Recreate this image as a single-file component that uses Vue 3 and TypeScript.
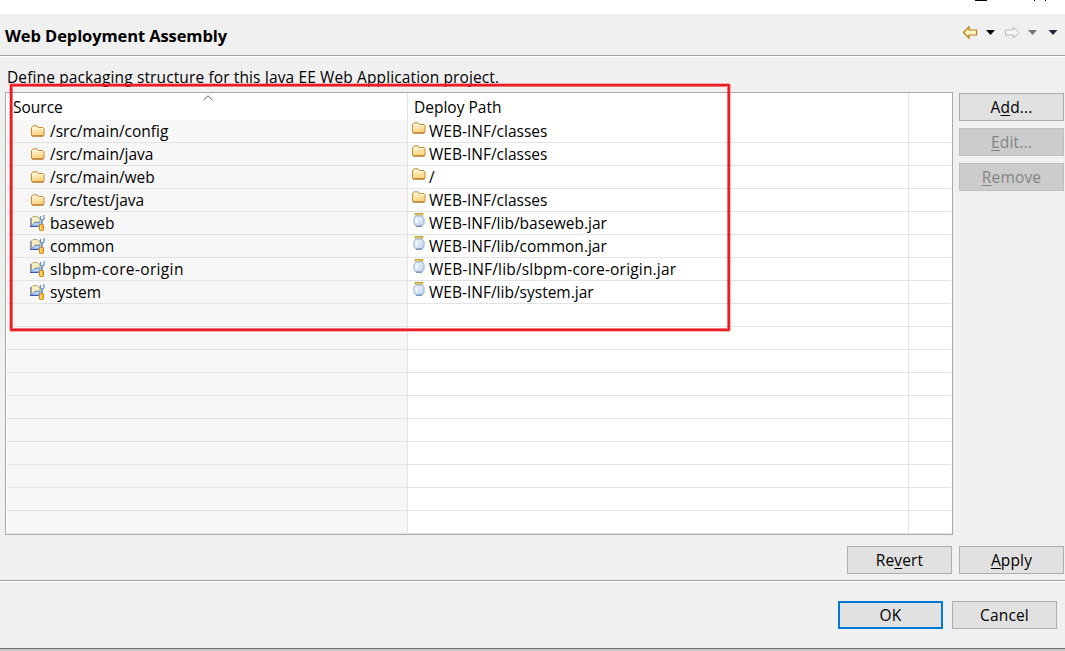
<script setup lang="ts">
interface Entry {
  source: string
  path: string
  kind: 'folder' | 'project'
}

const entries: Entry[] = [
  { source: '/src/main/config', path: 'WEB-INF/classes', kind: 'folder' },
  { source: '/src/main/java', path: 'WEB-INF/classes', kind: 'folder' },
  { source: '/src/main/web', path: '/', kind: 'folder' },
  { source: '/src/test/java', path: 'WEB-INF/classes', kind: 'folder' },
  { source: 'baseweb', path: 'WEB-INF/lib/baseweb.jar', kind: 'project' },
  { source: 'common', path: 'WEB-INF/lib/common.jar', kind: 'project' },
  { source: 'slbpm-core-origin', path: 'WEB-INF/lib/slbpm-core-origin.jar', kind: 'project' },
  { source: 'system', path: 'WEB-INF/lib/system.jar', kind: 'project' },
]
const emptyRows = 10
</script>

<template>
  <div class="dialog">
    <svg width="0" height="0" class="defs">
      <defs>
        <linearGradient id="gold" x1="0" y1="0" x2="0.3" y2="1">
          <stop offset="0" stop-color="#fffbe0" />
          <stop offset="1" stop-color="#fcd27c" />
        </linearGradient>
        <linearGradient id="glass" x1="0" y1="0" x2="1" y2="1">
          <stop offset="0" stop-color="#f4f9ff" />
          <stop offset="1" stop-color="#bcd3f0" />
        </linearGradient>
        <symbol id="folder" viewBox="0 0 14 12">
          <path d="M.5 10V2.500L2 .8h4l1.200 1.700H12l1 1V10l-.8 1H1.300z" fill="url(#gold)" stroke="#c88a35" />
          <path d="M1.500 3.500H12" stroke="#fff5cf" />
          <path d="M1 11h11.500" stroke="#ad6d20" />
        </symbol>
        <symbol id="project" viewBox="0 0 16 16">
          <path d="M1.500 11V3L3 1.500h4L8.500 3H10v4H5l-3.500 4z" fill="#f9edc4" stroke="#b8a575" />
          <path d="M.5 11.500V3" stroke="#7793c4" />
          <path d="M1 11L5 7.500h5.500L8.500 11z" fill="#b7d5f5" stroke="#6e9bd8" />
          <path d="M0 11.500H8.500" stroke="#3458ad" />
          <path d="M10.500 1v3l1.500 1.500L14 4V0" fill="none" stroke="#5f8fc0" stroke-width="1.200" />
          <path d="M12 5.500v4" stroke="#6286ae" stroke-width="1.500" />
          <rect x="9.500" y="9.500" width="4" height="6" rx=".8" fill="#f6b52b" stroke="#d18115" />
          <path d="M11 10v5" stroke="#ffe79a" />
        </symbol>
        <symbol id="jar" viewBox="0 0 12 16">
          <path d="M2 1.500h8v1.500H2z" fill="#fff1a6" stroke="#c5a12b" />
          <path d="M3 4L1 6.500v5L3 14h6l2-2.500v-5L9 4z" fill="url(#glass)" stroke="#94a9c6" />
          <path d="M3 14.200h6" stroke="#6282ad" />
          <path d="M3.300 7v4" stroke="#fff" />
        </symbol>
      </defs>
    </svg>

    <div class="caption"><i class="dash"></i><i class="dot"></i><i class="dot last"></i></div>
    <header>
      <h1>Web Deployment Assembly</h1>
      <nav>
        <svg width="100" height="18" viewBox="0 0 100 18">
          <path d="M1.400 8.500L7 3v3h7.500v5H7v3z" fill="#fff4c4" stroke="#bb7c16" stroke-width="1.200" />
          <path d="M24 6h9l-4.500 5z" fill="#000" />
          <path d="M57 8.500L51.500 3v3h-8v5h8v3z" fill="#f6f6f6" stroke="#b5b8b8" />
          <path d="M66 6h9l-4.500 5z" fill="#777" />
          <path d="M86.500 6h9l-4.500 5z" fill="#342044" />
        </svg>
      </nav>
    </header>
    <main>
      <p>Define packaging structure for this Java EE Web Application project.</p>
      <div class="body">
        <section class="table">
          <div class="row head">
            <div class="source">Source
              <svg class="sort" width="10" height="6" viewBox="0 0 10 6"><path d="M.7 5L5 .8 9.300 5" fill="none" stroke="#555" /></svg>
            </div>
            <div class="path">Deploy Path</div>
            <div class="rest"></div>
          </div>
          <div v-for="e in entries" :key="e.source" class="row">
            <div class="source">
              <svg v-if="e.kind === 'folder'" class="folder" width="14" height="12"><use href="#folder" /></svg>
              <svg v-else class="project" width="16" height="16"><use href="#project" /></svg>
              <span :class="{ wide: e.source.includes('-') }">{{ e.source }}</span>
            </div>
            <div class="path">
              <svg v-if="e.kind === 'folder'" class="folder" width="14" height="12"><use href="#folder" /></svg>
              <svg v-else class="jar" width="12" height="16"><use href="#jar" /></svg>
              <span :class="{ widepath: e.source.includes('-') }">{{ e.path }}</span>
            </div>
            <div class="rest"></div>
          </div>
          <div v-for="n in emptyRows" :key="n" class="row">
            <div class="source"></div><div class="path"></div><div class="rest"></div>
          </div>
        </section>
        <aside>
          <button>A<u>d</u>d...</button>
          <button disabled><u>E</u>dit...</button>
          <button disabled><u>R</u>emove</button>
        </aside>
      </div>
      <div class="page-actions">
        <button>Re<u>v</u>ert</button>
        <button><u>A</u>pply</button>
      </div>
    </main>
    <footer>
      <button class="primary">OK</button>
      <button>Cancel</button>
    </footer>
    <div class="edge"></div>
    <div class="highlight"></div>
  </div>
</template>

<style>
body { margin: 0; overflow: hidden; }
</style>

<style scoped>
* { box-sizing: border-box; }
.dialog {
  position: relative; width: 1065px; height: 651px; overflow: hidden;
  display: flex; flex-direction: column; background: #f0f0f0; color: #000;
  font: 15.5px/22px "Open Sans", "Noto Sans", sans-serif;
}
.defs { position: absolute; }
.caption { height: 14px; flex: none; background: #fff; display: flex; padding-left: 975px; }
.caption i { height: 1px; background: #000; }
.dash { width: 12px; }
.dot { width: 1px; margin-left: 47px; }
.dot.last { margin-left: 10px; }
header {
  height: 43px; flex: none; display: flex; justify-content: space-between;
  border-bottom: 1px solid #fff; box-shadow: inset 0 -1px #a0a0a0; padding-left: 5px;
}
h1 { margin: 11px 0 0; font-size: 16.5px; line-height: 22px; font-weight: 700; letter-spacing: -.1px; }
nav { width: 103px; padding-top: 10px; }
main { height: 523px; flex: none; }
p { margin: 0; padding: 9px 0 0 7px; height: 35px; white-space: nowrap; letter-spacing: .12px; }
.body { display: flex; gap: 6px; padding-left: 5px; }
.table { width: 948px; height: 443px; border: 1px solid #a8a8ae; background: #fff; overflow: hidden; padding: 0 1px; }
.row { height: 23px; display: flex; border-bottom: 1px solid #e3e3e3; white-space: nowrap; }
.source { width: 401px; flex: none; background: #f7f7f7; border-right: 1px solid #e3e3e3; display: flex; padding-left: 23px; }
.path { width: 501px; flex: none; border-right: 1px solid #e3e3e3; display: flex; padding-left: 5px; }
.rest { flex: 1; }
.head { height: 27px; border-bottom: 0; }
.head .source { background: #fff; padding: 3px 0 0 6px; position: relative; }
.head .path { padding: 3px 0 0 6px; }
.sort { position: absolute; left: 196px; top: 2px; }
.source .folder { margin: 5px 5px 0 1px; }
.source .project { margin: 3px 4px 0 0; }
.path .folder { margin: 2px 3px 0 -1px; }
.path .jar { margin: 0 4px 0 0; }
.wide { letter-spacing: .35px; }
.widepath { letter-spacing: .18px; }
aside { display: flex; flex-direction: column; gap: 7px; padding-top: 1px; }
button {
  width: 105px; height: 28px; padding: 0; border: 1px solid #adadad; background: #e1e1e1;
  color: #000; font: inherit; text-align: center; letter-spacing: .15px;
}
button:disabled { background: #ccc; border-color: #bfbfbf; color: #838383; }
u { text-decoration-thickness: 1px; text-underline-offset: 2px; }
.page-actions { display: flex; justify-content: flex-end; gap: 7px; padding: 11px 1px 0 0; }
footer {
  height: 68px; flex: none; display: flex; justify-content: flex-end; gap: 9px; padding: 20px 8px 0 0;
  border-top: 1px solid #a0a0a0; box-shadow: inset 0 1px #fff;
}
.primary { border: 2px solid #0078d7; }
.edge { height: 3px; flex: none; background: #c8c8c8; border-top: 1px solid #6e6e6e; }
.highlight {
  position: absolute; left: 10px; top: 84px; width: 720px; height: 247px; border: 2px solid #ed1c24; border-radius: 1px;
  box-shadow: 0 0 0 1px rgba(237, 28, 36, .3), inset 0 0 0 1px rgba(237, 28, 36, .6);
}
</style>
